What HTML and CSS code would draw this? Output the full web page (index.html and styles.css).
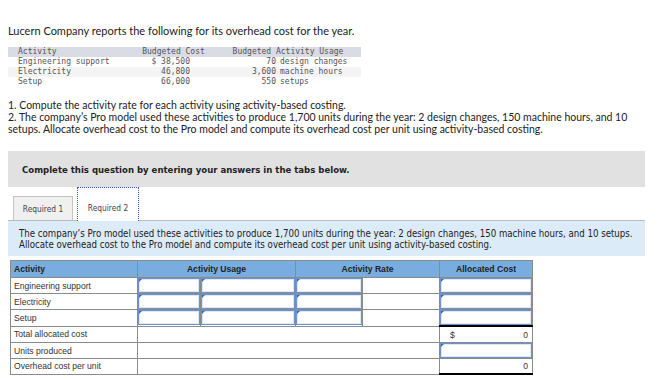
FILE: index.html
```html
<!DOCTYPE html>
<html>
<head>
<meta charset="utf-8">
<link rel="stylesheet" href="styles.css">
</head>
<body>
<p class="intro">Lucern Company reports the following for its overhead cost for the year.</p>
<table class="data">
  <tr class="dh"><td class="c1">Activity</td><td class="c2h">Budgeted Cost</td><td class="c3h" colspan="2">Budgeted Activity Usage</td></tr>
  <tr><td class="c1">Engineering support</td><td class="c2">$ 38,500</td><td class="c3">70</td><td class="c4">design changes</td></tr>
  <tr class="alt"><td class="c1">Electricity</td><td class="c2">46,800</td><td class="c3">3,600</td><td class="c4">machine hours</td></tr>
  <tr><td class="c1">Setup</td><td class="c2">66,000</td><td class="c3">550</td><td class="c4">setups</td></tr>
</table>
<p class="questions">1. Compute the activity rate for each activity using activity-based costing.<br>2. The company’s Pro model used these activities to produce 1,700 units during the year: 2 design changes, 150 machine hours, and 10<br>setups. Allocate overhead cost to the Pro model and compute its overhead cost per unit using activity-based costing.</p>
<div class="notice">Complete this question by entering your answers in the tabs below.</div>
<div class="tabs">
  <div class="tab">Required 1</div>
  <div class="tab active">Required 2</div>
</div>
<div class="info">The company’s Pro model used these activities to produce 1,700 units during the year: 2 design changes, 150 machine hours, and 10 setups.<br>Allocate overhead cost to the Pro model and compute its overhead cost per unit using activity-based costing.</div>
<table class="ans">
  <colgroup><col class="w1"><col class="w2"><col class="w3"><col class="w4"><col class="w5"><col class="w6"></colgroup>
  <tr class="hd"><th class="left">Activity</th><th colspan="2">Activity Usage</th><th colspan="2">Activity Rate</th><th>Allocated Cost</th></tr>
  <tr><td class="lbl">Engineering support</td><td class="in"><div class="box"></div></td><td class="in"><div class="box"></div></td><td class="in"><div class="box"></div></td><td class="plain"></td><td class="in"><div class="box"></div></td></tr>
  <tr><td class="lbl">Electricity</td><td class="in"><div class="box"></div></td><td class="in"><div class="box"></div></td><td class="in"><div class="box"></div></td><td class="plain"></td><td class="in"><div class="box"></div></td></tr>
  <tr><td class="lbl">Setup</td><td class="in"><div class="box"></div></td><td class="in"><div class="box"></div></td><td class="in"><div class="box"></div></td><td class="plain"></td><td class="in"><div class="box"></div></td></tr>
  <tr><td class="lbl">Total allocated cost</td><td colspan="4"></td><td class="total"><span>$</span><span>0</span></td></tr>
  <tr class="short"><td class="lbl">Units produced</td><td colspan="4"></td><td class="in"><div class="box"></div></td></tr>
  <tr class="short"><td class="lbl">Overhead cost per unit</td><td colspan="4"></td><td class="final">0</td></tr>
</table>
</body>
</html>
```
FILE: styles.css
```css
body {
  margin: 0;
  padding: 0 8px;
  background: #fff;
  color: #333;
  font-family: Lato, "Open Sans", sans-serif;
}
.intro {
  margin: 24px 0 0;
  font-size: 11px;
  line-height: 14px;
  color: #222;
}
.data {
  margin-top: 9px;
  border-collapse: collapse;
  width: 353px;
  font-family: "DejaVu Sans Mono", "Liberation Mono", monospace;
  font-size: 8px;
  line-height: 10px;
  color: #555;
}
.data td { padding: 0; height: 10px; white-space: pre; }
.data .dh { background: #d9dce4; }
.data .alt { background: #f4f4f4; }
.data .c1 { width: 116px; padding-left: 10px; }
.data .c2h { width: 79px; text-align: center; }
.data .c2 { text-align: right; padding-right: 23px; }
.data .c3h { text-align: center; padding-left: 2px; }
.data .c3 { width: 63px; text-align: right; }
.data .c4 { padding-left: 4px; }
.questions {
  margin: 12px 0 0;
  font-size: 10.5px;
  line-height: 12px;
  color: #222;
}
.notice {
  margin-top: 16px;
  width: 623px;
  height: 36px;
  padding-left: 14px;
  display: flex;
  align-items: center;
  background: #e1e1e1;
  font-family: "DejaVu Sans Condensed", "DejaVu Sans", sans-serif;
  font-weight: bold;
  font-size: 9.5px;
  color: #222;
}
.tabs {
  margin-top: 0;
  padding-left: 5px;
  display: flex;
  align-items: flex-end;
  gap: 4px;
  height: 33px;
  font-family: "DejaVu Sans Condensed", "DejaVu Sans", sans-serif;
  font-size: 8.3px;
  color: #444;
}
.tab {
  width: 58px;
  height: 23px;
  border: 1px solid #c4c4c4;
  border-bottom: none;
  background: #f0f0f0;
  display: flex;
  align-items: center;
  justify-content: center;
}
.tab.active {
  box-sizing: border-box;
  width: 62px;
  height: 34px;
  margin-bottom: -1px;
  padding-bottom: 8px;
  align-items: flex-end;
  background: #fff;
  border: 1px dotted #2b5fb3;
  border-bottom: none;
  position: relative;
  z-index: 1;
}
.info {
  width: 626px;
  padding: 7px 0 6px 11px;
  border-top: 1px solid #bcbcbc;
  background: #dcebf8;
  font-family: "DejaVu Sans Condensed", "DejaVu Sans", sans-serif;
  font-size: 9.6px;
  line-height: 11px;
  color: #222;
}
.ans {
  margin: 4px 0 0 2px;
  border-collapse: collapse;
  table-layout: fixed;
  width: 522px;
  font-family: "Liberation Sans", Arial, sans-serif;
  font-size: 8.6px;
  color: #333;
}
.w1 { width: 127px; }
.w2 { width: 63px; }
.w3 { width: 95px; }
.w4 { width: 67px; }
.w5 { width: 77px; }
.w6 { width: 93px; }
.ans th, .ans td {
  border: 1px solid #8a8a8a;
  padding: 0;
  height: 15px;
}
.ans .hd th {
  background: #79addf;
  color: #222;
  font-weight: bold;
  height: 16px;
}
.ans th.left { text-align: left; padding-left: 3px; }
.ans .lbl { padding-left: 3px; }
.ans .short td { height: 14px; }
.ans td.in { padding: 0; }
.box {
  position: relative;
  height: 13px;
  border: 1px solid #6c93cb;
  box-shadow: inset 0 0 0 1px #dfe8f4;
}
.box::before {
  content: "";
  position: absolute;
  left: 0;
  top: 0;
  border-top: 3px solid #2f6cc4;
  border-right: 3px solid transparent;
}
.ans td.total {
  border-top: 2px solid #000;
  padding: 0 4px 0 10px;
  white-space: nowrap;
}
.total span:first-child { float: left; }
.total span:last-child { float: right; }
.ans td.final {
  text-align: right;
  padding-right: 4px;
  border-top: 1px solid #000;
  border-bottom: 2px solid #000;
}
```
